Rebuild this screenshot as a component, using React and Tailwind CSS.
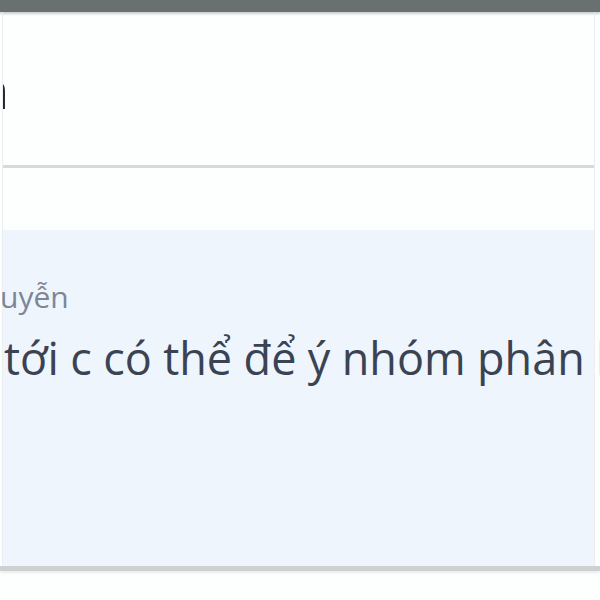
export default function App() {
  return (
    <div className="w-[600px] h-[600px] overflow-hidden bg-[#fdfefe] font-['Open_Sans',sans-serif]">
      {/* top toolbar edge */}
      <div className="h-[12px] bg-[#687070] shadow-[0_2px_2px_rgba(60,70,70,0.25)]" />

      <div className="mx-[2px] w-[593px] border-x border-[#eaeef0]">
        {/* header, only the tail of the title is in view */}
        <div className="h-[153px] flex items-center overflow-hidden">
          <h2 className="ml-[-27px] text-[52px] leading-[60px] font-semibold text-[#1f2630] whitespace-nowrap">
            n
          </h2>
        </div>
        <div className="h-[3px] bg-[#d8dada]" />

        <div className="h-[62px]" />

        {/* comment */}
        <div className="h-[336px] bg-[#eef5fd] pt-[49px] whitespace-nowrap">
          <p className="ml-[-3px] text-[30px] leading-[36px] text-[#7d8696]">uyễn</p>
          <p className="mt-[16px] ml-[1px] text-[45px] leading-[53px] text-[#3b4353] [word-spacing:-0.3px]">
            tới c có thể để ý nhóm phân loại
          </p>
        </div>
      </div>

      <div className="h-[5px] bg-[#cfd1d1] shadow-[0_2px_3px_rgba(0,0,0,0.08)]" />
    </div>
  );
}
